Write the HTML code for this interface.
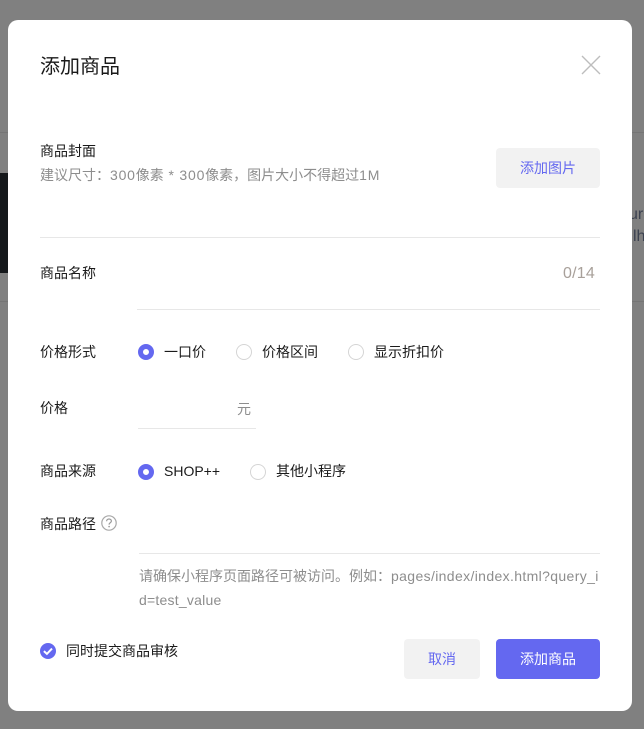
<!DOCTYPE html>
<html lang="zh-CN">
<head>
<meta charset="utf-8">
<style>
*{box-sizing:border-box}
html,body{margin:0;padding:0}
body{width:644px;height:729px;position:relative;overflow:hidden;background:#808080;font-family:"Liberation Sans","Noto Sans CJK SC",sans-serif;font-size:14px;color:#1a1a1a}
.a{position:absolute;white-space:nowrap}
.t{line-height:20px;height:20px}
.g{color:#8d8d8d}
.line{position:absolute;height:1px;background:#e7e7e7}
.r{position:absolute;width:16px;height:16px;border-radius:50%;border:1px solid #d5d5d5;background:#fff}
.r.on{border:5px solid #6468f0}
.btn{position:absolute;height:40px;line-height:40px;text-align:center;border-radius:4px;background:#f2f2f2;color:#6468f0}
.bg{position:absolute;background:#757575;height:1px}
.n{letter-spacing:.8px}
.p{letter-spacing:.36px}
</style>
</head>
<body>
<div class="bg" style="left:0;top:132px;width:644px"></div>
<div class="bg" style="left:0;top:301px;width:644px"></div>
<div class="a" style="left:0;top:173px;width:8px;height:100px;background:#15181b"></div>
<div class="a t" style="left:629px;top:205px;color:#3c4250;font-size:16px">ur</div>
<div class="a t" style="left:633px;top:227px;color:#3c4250;font-size:16px">lh</div>

<div class="a" style="left:8px;top:20px;width:624px;height:691px;background:#fff;border-radius:10px"></div>

<div class="a" style="left:40px;top:53px;font-size:20px;line-height:28px">添加商品</div>
<svg class="a" style="left:581px;top:55px" width="20" height="20" viewBox="0 0 20 20"><path d="M1 1L19 19M19 1L1 19" stroke="#bdbdbd" stroke-width="1.4" fill="none"/></svg>

<div class="a t" style="left:40px;top:141px">商品封面</div>
<div class="a t g" style="left:40px;top:165px">建议尺寸&#65306;<span class="n">300</span>像素<span class="n"> * 300</span>像素&#65292;图片大小不得超过<span class="n">1M</span></div>
<div class="btn" style="left:496px;top:148px;width:104px">添加图片</div>
<div class="line" style="left:40px;top:237px;width:560px"></div>

<div class="a t" style="left:40px;top:263px">商品名称</div>
<div class="a t" style="left:563px;top:264px;color:#a8a09a;font-size:16px;letter-spacing:.2px">0/14</div>
<div class="line" style="left:137px;top:309px;width:463px"></div>

<div class="a t" style="left:40px;top:342px">价格形式</div>
<div class="r on" style="left:138px;top:344px"></div>
<div class="a t" style="left:164px;top:342px">一口价</div>
<div class="r" style="left:236px;top:344px"></div>
<div class="a t" style="left:262px;top:342px">价格区间</div>
<div class="r" style="left:348px;top:344px"></div>
<div class="a t" style="left:374px;top:342px">显示折扣价</div>

<div class="a t" style="left:40px;top:398px">价格</div>
<div class="a t g" style="left:237px;top:399px">元</div>
<div class="line" style="left:138px;top:428px;width:118px"></div>

<div class="a t" style="left:40px;top:461px">商品来源</div>
<div class="r on" style="left:138px;top:464px"></div>
<div class="a t" style="left:164px;top:461px">SHOP++</div>
<div class="r" style="left:250px;top:464px"></div>
<div class="a t" style="left:276px;top:461px">其他小程序</div>

<div class="a t" style="left:40px;top:514px">商品路径</div>
<svg class="a" style="left:101px;top:515px" width="16" height="16" viewBox="0 0 16 16"><circle cx="8" cy="8" r="7.2" stroke="#a8a8a8" stroke-width="1.2" fill="none"/><path d="M5.6 6.3C5.6 4.9 6.7 4 8 4C9.4 4 10.4 4.9 10.4 6.1C10.4 7.6 8.1 7.7 8.1 9.6" stroke="#9a9a9a" stroke-width="1.2" fill="none"/><circle cx="8.1" cy="11.6" r=".8" fill="#9a9a9a"/></svg>
<div class="line" style="left:139px;top:553px;width:461px"></div>
<div class="a g" style="left:139px;top:564px;line-height:24px">请确保小程序页面路径可被访问。例如&#65306;<span class="p">pages/index/index.html?query_i</span><br><span class="p" style="letter-spacing:.23px">d=test_value</span></div>

<svg class="a" style="left:40px;top:643px" width="16" height="16" viewBox="0 0 16 16"><circle cx="8" cy="8" r="8" fill="#6468f0"/><path d="M3.9 8.1L6.9 10.9L12 5.6" stroke="#fff" stroke-width="2" fill="none"/></svg>
<div class="a t" style="left:66px;top:641px">同时提交商品审核</div>

<div class="btn" style="left:404px;top:639px;width:76px">取消</div>
<div class="btn" style="left:496px;top:639px;width:104px;background:#6468f0;color:#fff">添加商品</div>
</body>
</html>
